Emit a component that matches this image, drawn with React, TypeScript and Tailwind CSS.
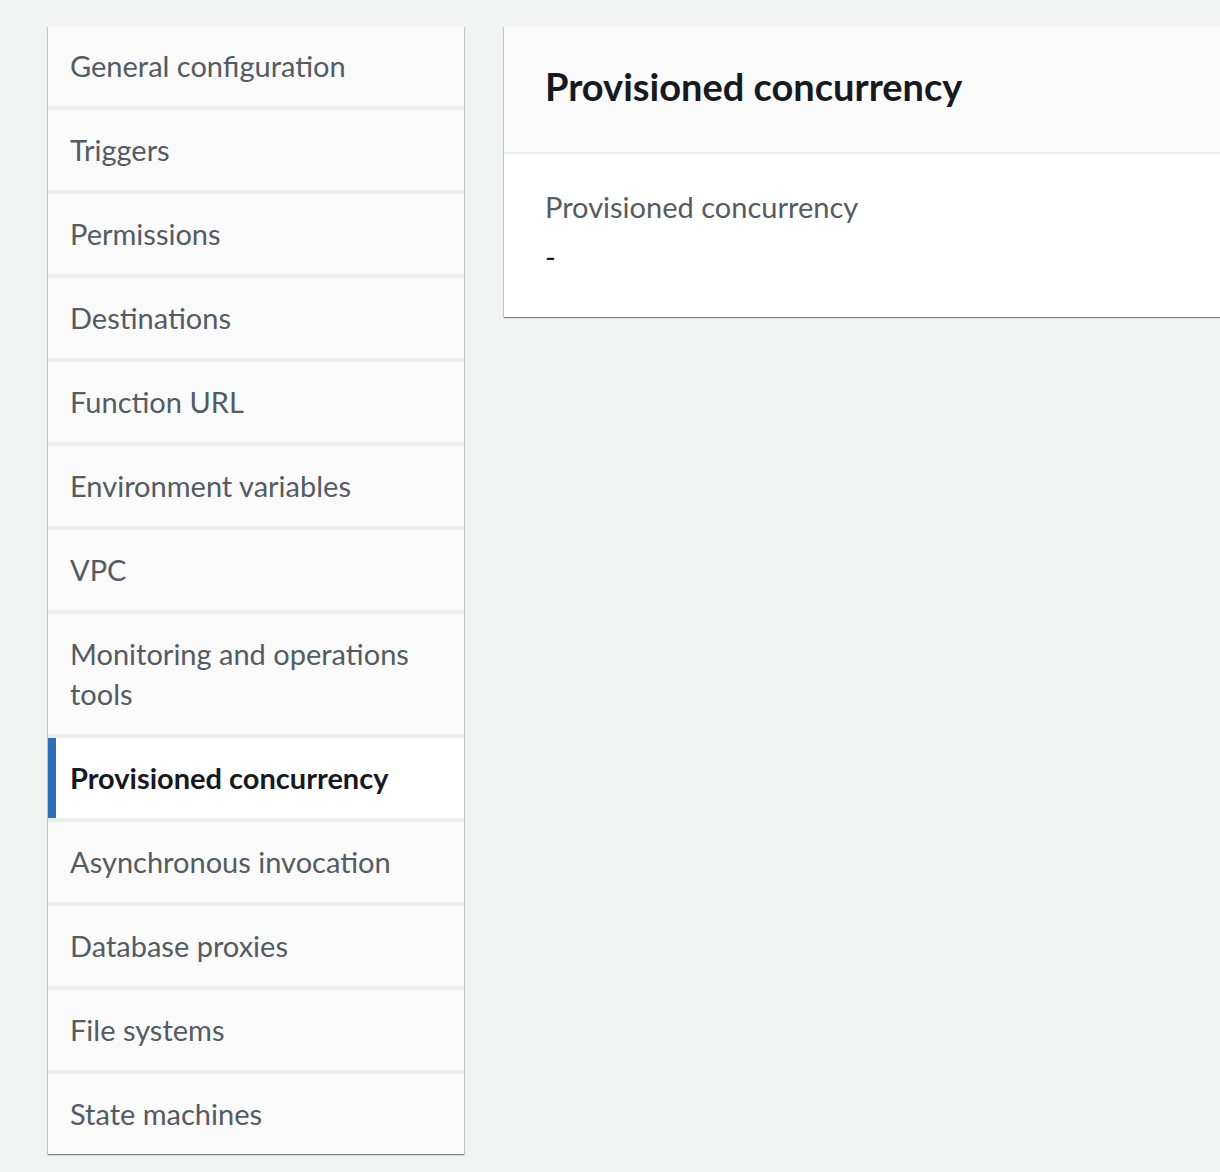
const items = [
  'General configuration',
  'Triggers',
  'Permissions',
  'Destinations',
  'Function URL',
  'Environment variables',
  'VPC',
  'Monitoring and operations tools',
  'Provisioned concurrency',
  'Asynchronous invocation',
  'Database proxies',
  'File systems',
  'State machines',
]

const active = 'Provisioned concurrency'

export default function App() {
  return (
    <div
      className="min-h-screen w-[1220px] overflow-hidden bg-[#f2f3f3] pl-[48px] pt-[26px] pb-[16px] flex items-start gap-[40px]"
      style={{ fontFamily: 'Lato, "Liberation Sans", sans-serif' }}>
      {/* side navigation */}
      <nav className="w-[416px] shrink-0 flex flex-col gap-[4px] bg-[#eaeded] shadow-[0_1px_1px_0_rgba(0,28,36,0.3),1px_1px_1px_0_rgba(0,28,36,0.15),-1px_1px_1px_0_rgba(0,28,36,0.15)]">
        {items.map((label) => {
          const on = label === active
          return (
            <div
              key={label}
              className={
                on
                  ? 'relative bg-white pl-[22px] pr-[20px] py-[20px] text-[29px] leading-[40px] font-bold text-[#16191f]'
                  : 'bg-[#fafafa] pl-[22px] pr-[20px] py-[20px] text-[29px] leading-[40px] text-[#545b64]'
              }>
              {on && <span className="absolute left-0 top-0 bottom-0 w-[8px] bg-[#2f6eb5]" />}
              {label}
            </div>
          )
        })}
      </nav>

      {/* detail panel */}
      <section className="w-[760px] shrink-0 bg-white shadow-[0_1px_1px_0_rgba(0,28,36,0.3),1px_1px_1px_0_rgba(0,28,36,0.15),-1px_1px_1px_0_rgba(0,28,36,0.15)]">
        <header className="h-[128px] flex items-center px-[41px] pb-[6px] bg-[#fafafa] border-b-2 border-[#eaeded]">
          <h2 className="text-[38px] leading-[46px] font-bold text-[#16191f]">Provisioned concurrency</h2>
        </header>
        <div className="pl-[41px] pt-[33px] pb-[40px]">
          <div className="text-[29px] leading-[40px] text-[#545b64]">Provisioned concurrency</div>
          <div className="mt-[10px] text-[29px] leading-[40px] text-[#16191f]">-</div>
        </div>
      </section>
    </div>
  )
}
